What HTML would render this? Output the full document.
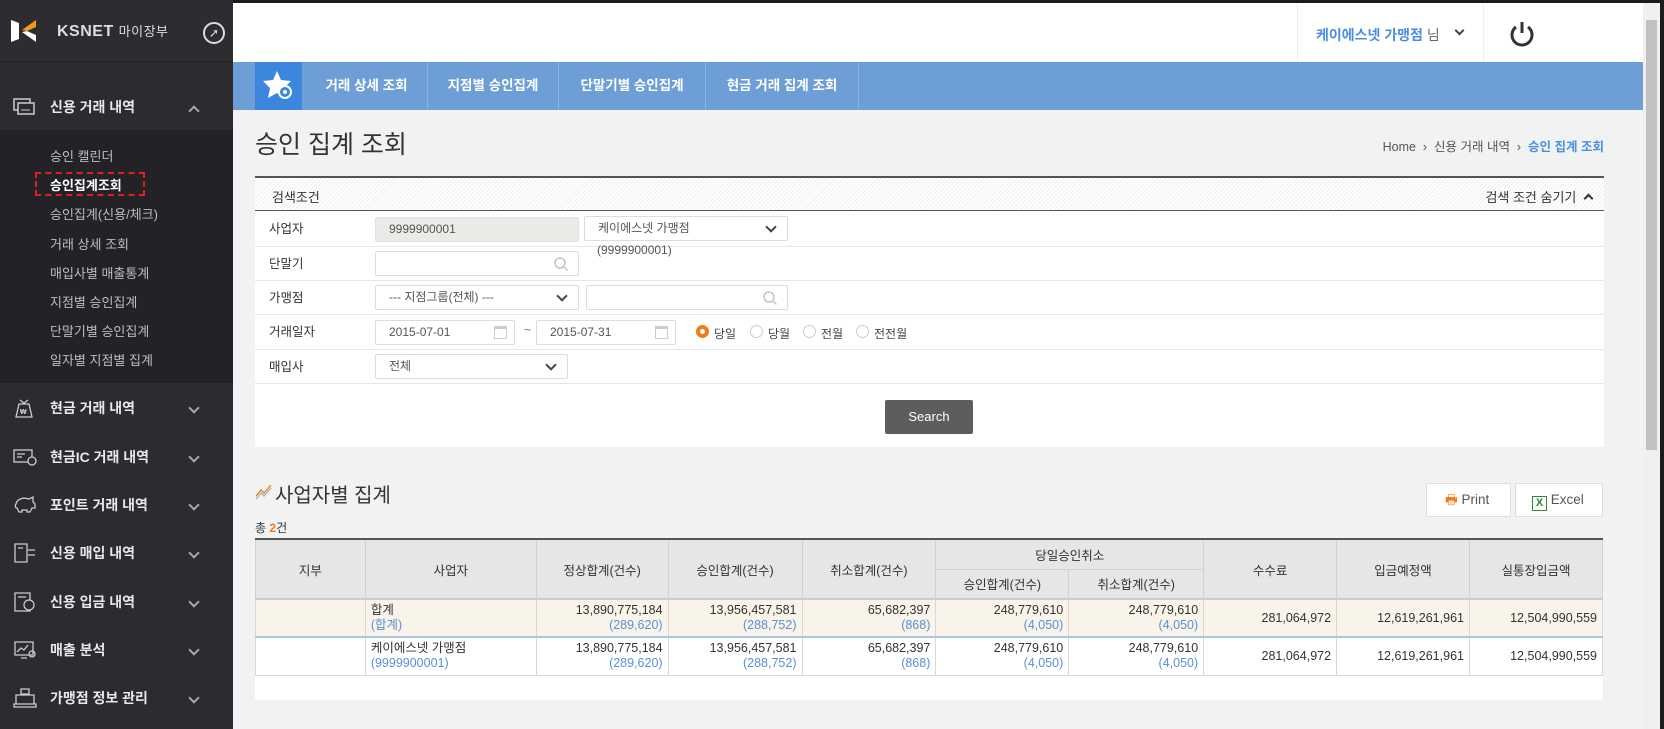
<!DOCTYPE html>
<html><head><meta charset="utf-8"><style>
*{box-sizing:border-box;margin:0;padding:0}
body{width:1664px;height:729px;overflow:hidden;background:#1c1c1e;font-family:"Liberation Sans","Noto Sans CJK KR",sans-serif;font-size:12.5px;color:#333;position:relative}
.a{position:absolute}
#sb{left:0;top:0;width:233px;height:729px;background:#2b2b30}
.mi{position:absolute;left:0;width:233px;height:48px;color:#e8e8e8;font-size:14px;font-weight:bold;display:flex;align-items:center}
.mi .t{position:absolute;left:50px}
.mi .ch{position:absolute;left:190px;width:8px;height:8px;border-right:2px solid #aaa;border-bottom:2px solid #aaa;transform:rotate(45deg)}
.mi svg{position:absolute;left:13px}
.sub{position:absolute;left:50px;color:#bdbdbd;font-size:13px}
#main{left:233px;top:3px;width:1410px;height:726px;background:#f1f2f2;overflow:hidden}
.inp{position:absolute;height:25px;background:#fff;border:1px solid #dcdcdc;border-radius:2px;font-size:12px;color:#555;padding-left:13px;line-height:23px}
.sel:after{content:"";position:absolute;right:12px;top:6px;width:6px;height:6px;border-right:2px solid #444;border-bottom:2px solid #444;transform:rotate(45deg)}
.lbl{position:absolute;left:14px;font-size:12.5px;color:#333}
.row{position:absolute;left:0;width:1349px;border-bottom:1px solid #e6e6e6}
table{border-collapse:collapse;position:absolute;left:22px;top:535px;width:1348px;font-size:12.5px}
th{background:#e6e6e6;font-weight:normal;color:#333;border:1px solid #d0d0d0;border-top:none}
td{border:1px solid #d8d8d8;height:38px;text-align:right;padding:0 5px;line-height:15px;color:#333}
.b{color:#5b8fd6}
.rad{position:absolute;top:5px;width:13px;height:13px;border-radius:50%;border:1px solid #ccc;background:#fff}
.mag{position:absolute;right:9px;top:4px}
</style></head><body>
<div id="sb" class="a">
 <div class="a" style="left:0;top:0;width:233px;height:62px;background:#2c2c31;border-bottom:1px solid #222"></div>
 <svg class="a" style="left:10px;top:17px" width="28" height="28" viewBox="0 0 28 28"><path d="M1 3 L9 6 L9 22 L1 25Z" fill="#fff"/><path d="M12 13 L26 3 L26 10 L17 14Z" fill="#f39a1e"/><path d="M12 15 L17 14 L26 18 L26 25Z" fill="#fff"/></svg>
 <div class="a" style="left:57px;top:21px;color:#ddd;font-weight:bold;font-size:16px;letter-spacing:0.5px">KSNET <span style="font-weight:normal;font-size:13px">마이장부</span></div>
 <div class="a" style="left:203px;top:22px;width:22px;height:22px;border:2px solid #ddd;border-radius:50%;color:#ddd;font-size:12px;text-align:center;line-height:18px">➚</div>
 <div class="mi" style="top:84px;height:46px;background:#2b2b30"><svg width="22" height="18" viewBox="0 0 22 18"><rect x="1" y="1" width="16" height="11" fill="none" stroke="#ccc" stroke-width="1.5"/><rect x="5" y="5" width="16" height="11" fill="#2b2b30" stroke="#ccc" stroke-width="1.5"/><path d="M8 12h9" stroke="#ccc"/></svg><span class="t">신용 거래 내역</span><span class="ch" style="transform:rotate(225deg);top:23px"></span></div>
 <div class="a" style="left:0;top:130px;width:233px;height:253px;background:#232327"></div>
 <div class="sub" style="top:146px">승인 캘린더</div>
 <div class="sub" style="top:175px;color:#fff;font-weight:bold">승인집계조회</div>
 <div class="a" style="left:35px;top:172px;width:110px;height:24px;border:2px dashed #e02020"></div>
 <div class="sub" style="top:204px">승인집계(신용/체크)</div>
 <div class="sub" style="top:234px">거래 상세 조회</div>
 <div class="sub" style="top:263px">매입사별 매출통계</div>
 <div class="sub" style="top:292px">지점별 승인집계</div>
 <div class="sub" style="top:321px">단말기별 승인집계</div>
 <div class="sub" style="top:350px">일자별 지점별 집계</div>
 <div class="mi" style="top:384px"><svg width="22" height="22" viewBox="0 0 22 22" fill="none" stroke="#ccc" stroke-width="1.3"><path d="M7 3l4 3 4-3M6 7h10l3 13H3z"/><text x="7" y="17" font-size="7" fill="#ccc" stroke="none">₩</text></svg><span class="t">현금 거래 내역</span><span class="ch"></span></div>
 <div class="mi" style="top:433px"><svg width="24" height="20" viewBox="0 0 24 20" fill="none" stroke="#ccc" stroke-width="1.3"><rect x="1" y="3" width="18" height="12"/><path d="M4 7h8M4 10h5"/><circle cx="19" cy="14" r="4" fill="#2b2b30"/></svg><span class="t">현금IC 거래 내역</span><span class="ch"></span></div>
 <div class="mi" style="top:481px"><svg width="24" height="20" viewBox="0 0 24 20" fill="none" stroke="#ccc" stroke-width="1.3"><path d="M3 9c1-5 7-7 13-5l4-2v5l2 2v4h-3l-2 4h-3v-2H9v2H6l-2-4c-2 0-2-3-1-4z"/></svg><span class="t">포인트 거래 내역</span><span class="ch"></span></div>
 <div class="mi" style="top:529px"><svg width="24" height="22" viewBox="0 0 24 22" fill="none" stroke="#ccc" stroke-width="1.3"><path d="M2 2h12v18H2zM15 8h7M15 13h7M5 6h5"/></svg><span class="t">신용 매입 내역</span><span class="ch"></span></div>
 <div class="mi" style="top:578px"><svg width="24" height="22" viewBox="0 0 24 22" fill="none" stroke="#ccc" stroke-width="1.3"><path d="M2 2h15v18H2zM5 6h8"/><circle cx="16" cy="14" r="5" fill="#2b2b30"/></svg><span class="t">신용 입금 내역</span><span class="ch"></span></div>
 <div class="mi" style="top:626px"><svg width="24" height="22" viewBox="0 0 24 22" fill="none" stroke="#ccc" stroke-width="1.3"><path d="M2 3h18v13H2zM8 19h6M4 13l4-4 3 2 4-5"/><circle cx="19" cy="15" r="3"/></svg><span class="t">매출 분석</span><span class="ch"></span></div>
 <div class="mi" style="top:674px"><svg width="24" height="22" viewBox="0 0 24 22" fill="none" stroke="#ccc" stroke-width="1.3"><path d="M8 2h8v5H8zM3 8h18v9H3zM1 17h22v3H1z"/></svg><span class="t">가맹점 정보 관리</span><span class="ch"></span></div>
</div>

<div id="main" class="a">
 <div class="a" style="left:0;top:0;width:1410px;height:59px;background:#fff"></div>
 <div class="a" style="left:1064px;top:0;width:1px;height:59px;background:#eee"></div>
 <div class="a" style="left:1250px;top:0;width:1px;height:59px;background:#eee"></div>
 <div class="a" style="left:1083px;top:22px;font-size:14px;font-weight:bold;color:#4a8ee0">케이에스넷 가맹점 <span style="color:#666;font-weight:normal">님</span></div>
 <div class="a" style="left:1223px;top:24px;width:7px;height:7px;border-right:2px solid #444;border-bottom:2px solid #444;transform:rotate(45deg)"></div>
 <svg class="a" style="left:1276px;top:17px" width="26" height="28" viewBox="0 0 26 28"><path d="M7 7a10 10 0 1 0 12 0" fill="none" stroke="#333" stroke-width="3"/><path d="M13 2v11" stroke="#333" stroke-width="3"/></svg>
 <div class="a" style="left:0;top:59px;width:1410px;height:48px;background:#6d9fd6"></div>
 <div class="a" style="left:22px;top:59px;width:47px;height:48px;background:#3d86de"></div>
 <svg class="a" style="left:30px;top:66px" width="32" height="32" viewBox="0 0 32 32"><path d="M14 2l4 9 10 1-7 7 2 10-9-5-9 5 2-10-7-7 10-1z" fill="#fff"/><circle cx="22" cy="23" r="6" fill="#3d86de" stroke="#fff" stroke-width="2"/><circle cx="22" cy="23" r="2" fill="#fff"/></svg>
 <div class="a" style="left:73px;top:59px;height:48px;display:flex;color:#fff;font-size:13.5px;font-weight:bold">
  <div style="width:122px;line-height:48px;text-align:center;border-right:1px solid #8bb3e0">거래 상세 조회</div>
  <div style="width:131px;line-height:48px;text-align:center;border-right:1px solid #8bb3e0">지점별 승인집계</div>
  <div style="width:147px;line-height:48px;text-align:center;border-right:1px solid #8bb3e0">단말기별 승인집계</div>
  <div style="width:153px;line-height:48px;text-align:center;border-right:1px solid #8bb3e0">현금 거래 집계 조회</div>
 </div>
 <div class="a" style="left:22px;top:122px;font-size:25px;color:#333">승인 집계 조회</div>
 <div class="a" style="right:39px;top:133px;font-size:12.5px;color:#555">Home &nbsp;›&nbsp; 신용 거래 내역 &nbsp;›&nbsp; <b style="color:#4a8ee0">승인 집계 조회</b></div>

 <div class="a" style="left:22px;top:173px;width:1349px;height:271px;background:#fff;border-top:2px solid #555">
  <div class="row" style="top:0;height:33px;background:repeating-linear-gradient(135deg,#fff 0 2px,#efefef 2px 3px);border-bottom:1px solid #555"></div>
  <div class="a" style="left:17px;top:9px;font-size:13px">검색조건</div>
  <div class="a" style="right:12px;top:9px;font-size:13px">검색 조건 숨기기 <span style="display:inline-block;width:7px;height:7px;border-left:2px solid #333;border-top:2px solid #333;transform:rotate(45deg);margin-left:5px"></span></div>
  <div class="row" style="top:33px;height:36px"></div>
  <div class="row" style="top:69px;height:34px"></div>
  <div class="row" style="top:103px;height:34px"></div>
  <div class="row" style="top:137px;height:35px"></div>
  <div class="row" style="top:172px;height:34px"></div>
  <div class="lbl" style="top:40px">사업자</div>
  <div class="lbl" style="top:75px">단말기</div>
  <div class="lbl" style="top:109px">가맹점</div>
  <div class="lbl" style="top:143px">거래일자</div>
  <div class="lbl" style="top:178px">매입사</div>
  <div class="inp" style="left:120px;top:39px;width:204px;background:#ebeae6;border-color:#e0e0e0">9999900001</div>
  <div class="inp sel" style="left:329px;top:38px;width:204px">케이에스넷 가맹점</div>
  <div class="a" style="left:342px;top:65px;font-size:12px;color:#555">(9999900001)</div>
  <div class="inp" style="left:120px;top:73px;width:204px"><svg class="mag" width="16" height="16" viewBox="0 0 16 16" fill="none" stroke="#c4c4c4" stroke-width="1.5"><circle cx="7" cy="7" r="5"/><path d="M10.5 10.5l4 4"/></svg></div>
  <div class="inp sel" style="left:120px;top:107px;width:204px">--- 지점그룹(전체) ---</div>
  <div class="inp" style="left:331px;top:107px;width:202px"><svg class="mag" width="16" height="16" viewBox="0 0 16 16" fill="none" stroke="#c4c4c4" stroke-width="1.5"><circle cx="7" cy="7" r="5"/><path d="M10.5 10.5l4 4"/></svg></div>
  <div class="inp" style="left:120px;top:142px;width:140px">2015-07-01<span style="position:absolute;right:7px;top:5px;width:13px;height:13px;border:1px solid #ccc;border-top:3px solid #ccc"></span></div>
  <div class="a" style="left:269px;top:145px;color:#777">~</div>
  <div class="inp" style="left:281px;top:142px;width:140px">2015-07-31<span style="position:absolute;right:7px;top:5px;width:13px;height:13px;border:1px solid #ccc;border-top:3px solid #ccc"></span></div>
  <div class="a" style="left:441px;top:142px;width:300px;height:25px;font-size:12px;color:#444">
   <span class="rad" style="left:0;border:4px solid #f07d1a"></span><span class="a" style="left:18px;top:5px">당일</span>
   <span class="rad" style="left:54px"></span><span class="a" style="left:72px;top:5px">당월</span>
   <span class="rad" style="left:107px"></span><span class="a" style="left:125px;top:5px">전월</span>
   <span class="rad" style="left:160px"></span><span class="a" style="left:178px;top:5px">전전월</span>
  </div>
  <div class="inp sel" style="left:120px;top:176px;width:193px">전체</div>
  <div class="a" style="left:630px;top:222px;width:88px;height:34px;background:#5d5d5d;border-radius:2px;color:#fff;font-size:13px;text-align:center;line-height:34px">Search</div>
 </div>

 <svg class="a" style="left:22px;top:480px" width="18" height="16" viewBox="0 0 18 16" fill="none" stroke-width="1.3"><path d="M1 13l5-6 3 3 7-8" stroke="#f07d1a"/><path d="M1 16l5-6 3 3 7-8" stroke="#aaa"/></svg>
 <div class="a" style="left:42px;top:476px;font-size:20px;color:#333">사업자별 집계</div>
 <div class="a" style="left:22px;top:516px;font-size:12px">총 <b style="color:#f07d1a">2</b>건</div>
 <div class="a" style="left:1193px;top:480px;width:85px;height:34px;background:#fff;border:1px solid #ddd;border-radius:2px;font-size:13.5px;color:#555;line-height:32px;padding-left:18px"><span style="color:#f07d1a">🖶</span> Print</div>
 <div class="a" style="left:1282px;top:480px;width:88px;height:34px;background:#fff;border:1px solid #ddd;border-radius:2px;font-size:13.5px;color:#555;line-height:32px;padding-left:16px"><span style="display:inline-block;width:15px;height:15px;border:1.5px solid #2a8a3a;color:#2a8a3a;font-size:11px;line-height:12px;text-align:center;font-weight:bold;vertical-align:-2px">X</span> Excel</div>

 <div class="a" style="left:22px;top:535px;width:1348px;height:162px;background:#fff"></div>
 <table>
  <colgroup><col style="width:110px"><col style="width:171px"><col style="width:132px"><col style="width:134px"><col style="width:134px"><col style="width:133px"><col style="width:135px"><col style="width:133px"><col style="width:133px"><col style="width:133px"></colgroup>
  <tr style="height:30px;border-top:2px solid #555"><th rowspan="2">지부</th><th rowspan="2">사업자</th><th rowspan="2">정상합계(건수)</th><th rowspan="2">승인합계(건수)</th><th rowspan="2">취소합계(건수)</th><th colspan="2">당일승인취소</th><th rowspan="2">수수료</th><th rowspan="2">입금예정액</th><th rowspan="2">실통장입금액</th></tr>
  <tr style="height:30px"><th>승인합계(건수)</th><th>취소합계(건수)</th></tr>
  <tr style="background:#f9f4e9;border-top:2px solid #ccc"><td></td><td style="text-align:left">합계<br><span class="b">(합계)</span></td><td>13,890,775,184<br><span class="b">(289,620)</span></td><td>13,956,457,581<br><span class="b">(288,752)</span></td><td>65,682,397<br><span class="b">(868)</span></td><td>248,779,610<br><span class="b">(4,050)</span></td><td>248,779,610<br><span class="b">(4,050)</span></td><td>281,064,972</td><td>12,619,261,961</td><td>12,504,990,559</td></tr>
  <tr style="background:#fff;border-top:2px solid #a9c6ea;color:#555"><td></td><td style="text-align:left">케이에스넷 가맹점<br><span class="b">(9999900001)</span></td><td>13,890,775,184<br><span class="b">(289,620)</span></td><td>13,956,457,581<br><span class="b">(288,752)</span></td><td>65,682,397<br><span class="b">(868)</span></td><td>248,779,610<br><span class="b">(4,050)</span></td><td>248,779,610<br><span class="b">(4,050)</span></td><td>281,064,972</td><td>12,619,261,961</td><td>12,504,990,559</td></tr>
 </table>
</div>
<div class="a" style="left:1643px;top:3px;width:17px;height:726px;background:#f0f0f0"></div>
<div class="a" style="left:1646px;top:20px;width:11px;height:430px;background:#c1c1c1"></div>
</body></html>
